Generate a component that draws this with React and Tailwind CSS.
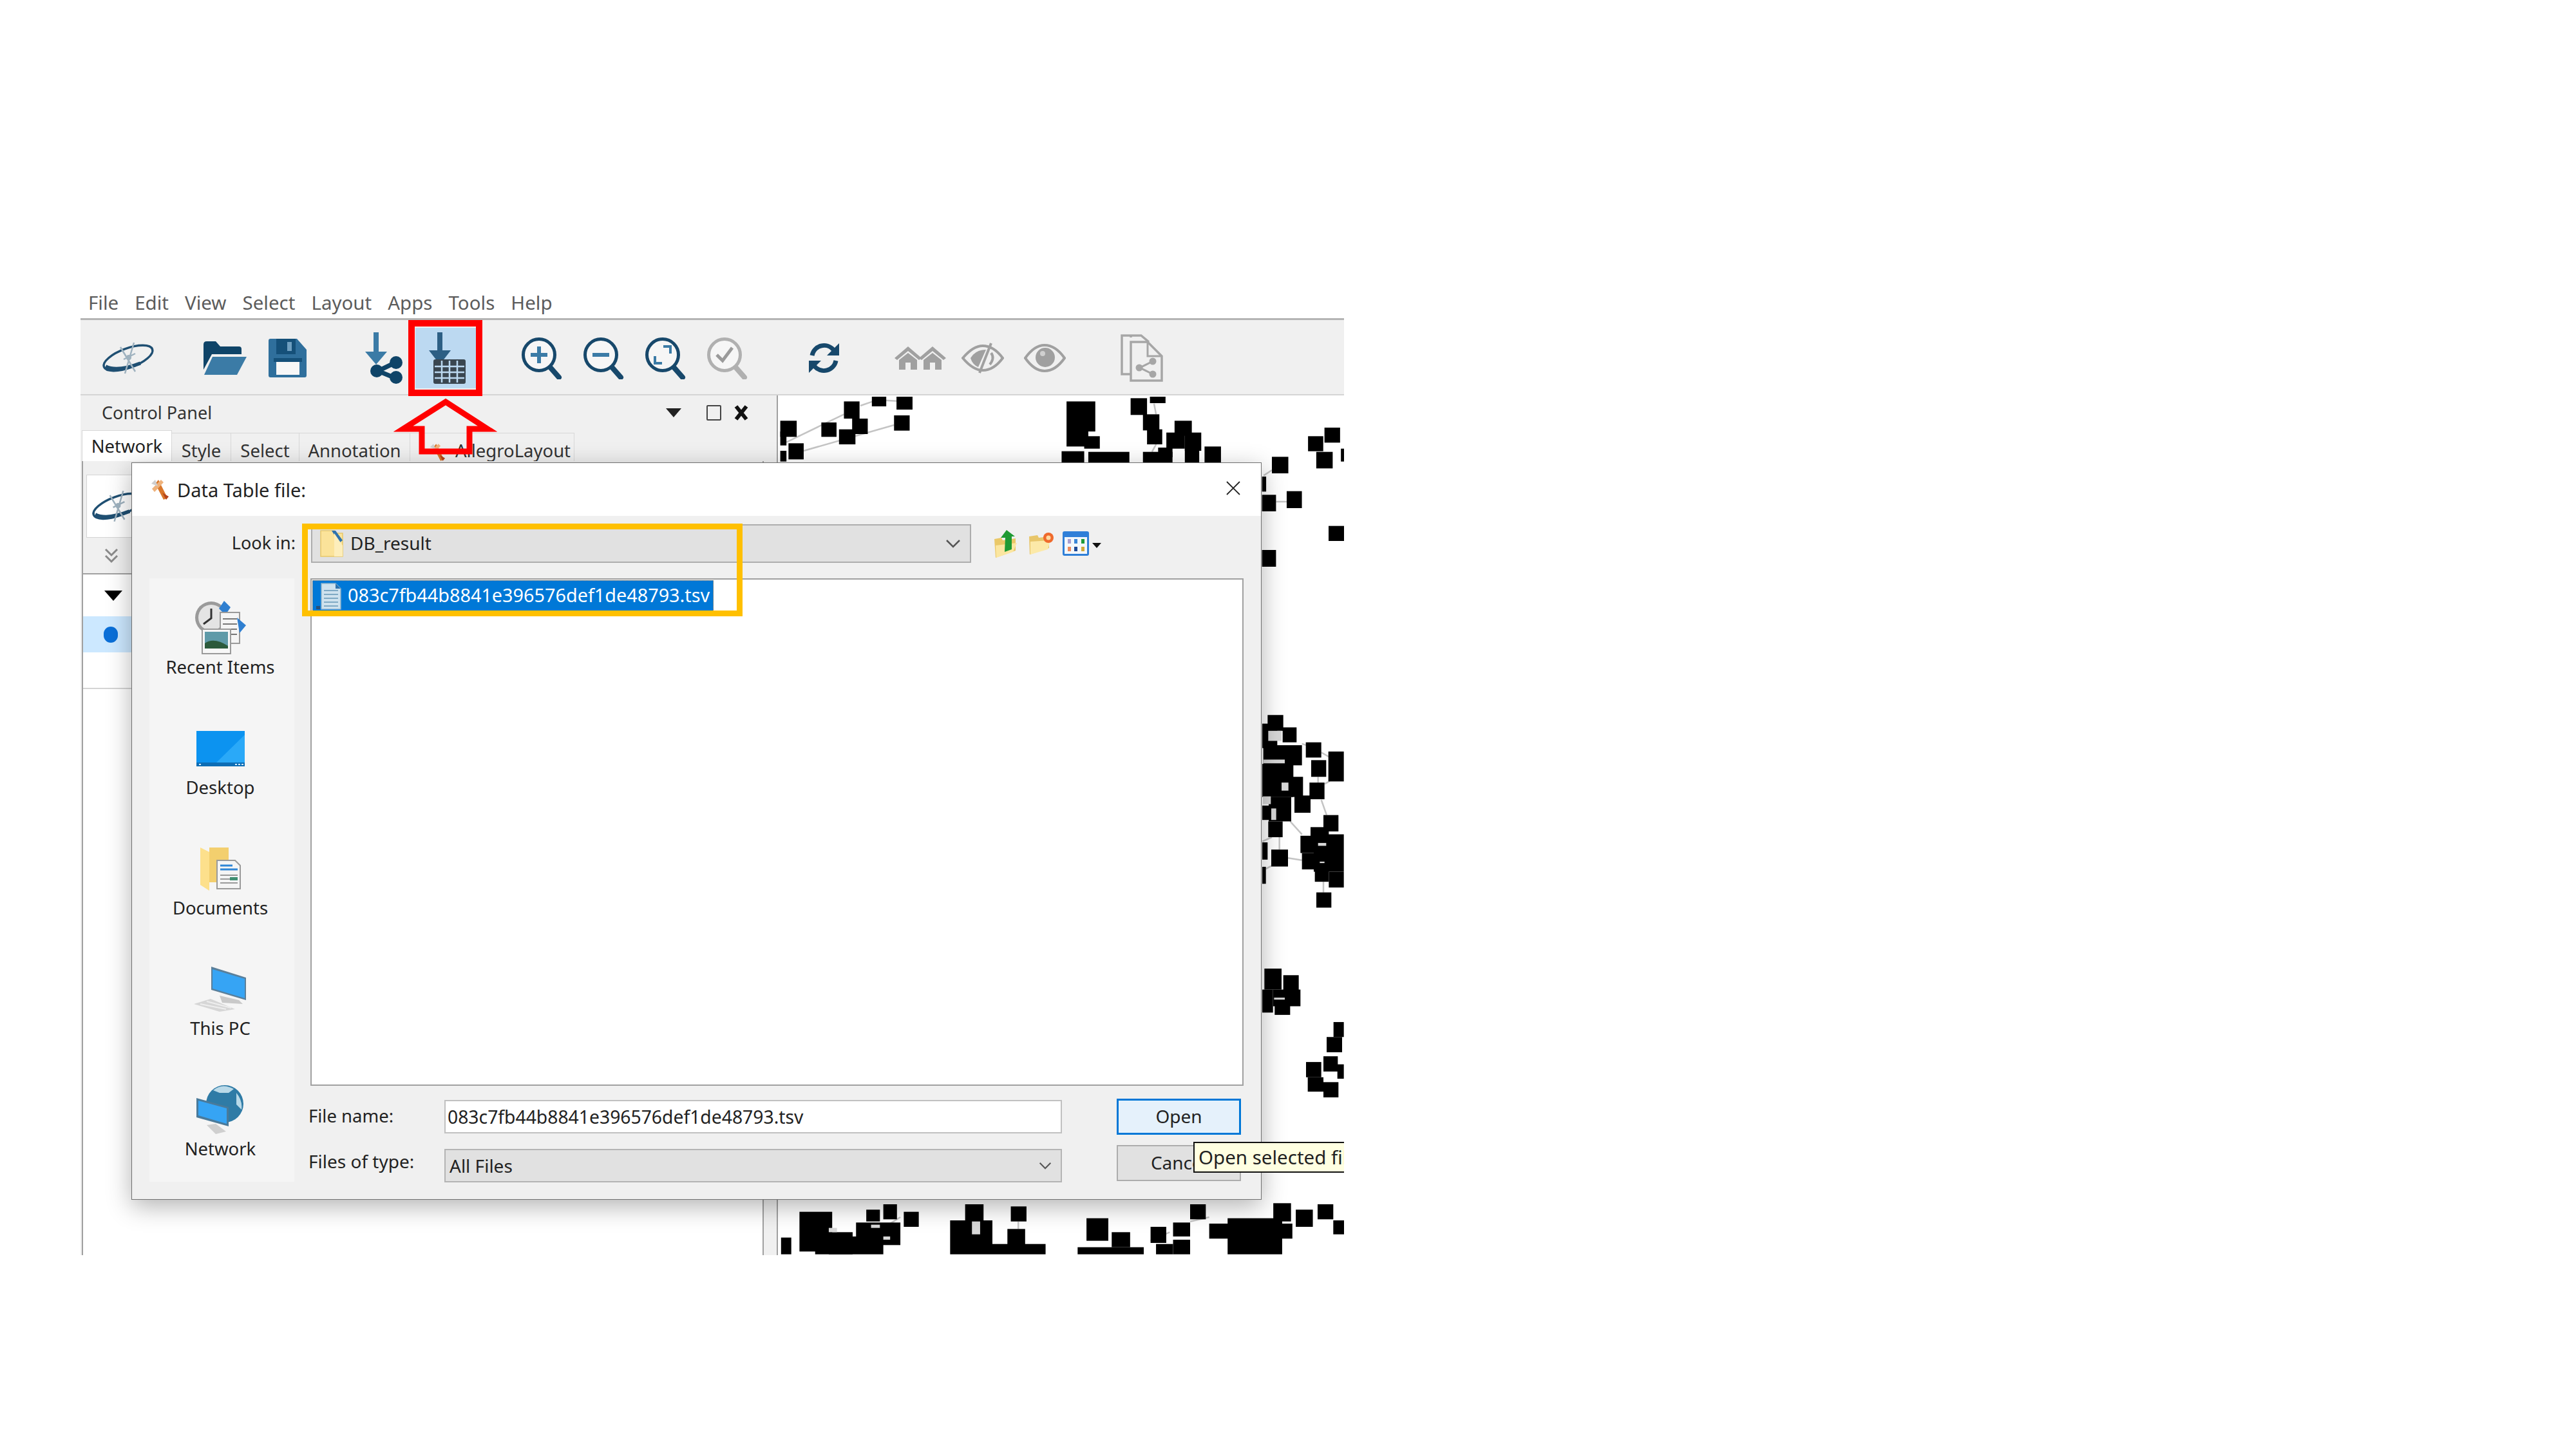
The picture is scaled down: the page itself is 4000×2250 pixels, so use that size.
const fromCrop = (ox, oy, sx, sy) => ([a, b, c, d]) => ({
  x: ox + a / sx,
  y: oy + c / sy,
  width: (b - a) / sx,
  height: (d - c) / sy,
});
const fromCropLine = (ox, oy, sx, sy) => ([a, b, c, d]) => ({
  x1: ox + a / sx,
  y1: oy + b / sy,
  x2: ox + c / sx,
  y2: oy + d / sy,
});

// node blocks of the network view, measured per zoomed area
const topArea = fromCrop(1100, 430, 1.568, 3);
const midArea = fromCrop(1900, 1050, 3, 2.24);
const lowArea = fromCrop(440, 1650, 0.9446, 3);

const nodes = [
  ...[
    [175, 215, 670, 745], [175, 190, 720, 785], [195, 232, 775, 850], [175, 190, 810, 860],
    [275, 312, 678, 745], [330, 368, 580, 660], [350, 388, 660, 732], [318, 358, 710, 780],
    [398, 433, 558, 603], [458, 497, 558, 618], [452, 490, 645, 716],
    [872, 942, 580, 720], [872, 925, 720, 790], [915, 953, 742, 800], [860, 915, 812, 865], [925, 1025, 815, 865],
    [1028, 1068, 565, 643], [1075, 1113, 558, 588], [1058, 1098, 640, 715], [1068, 1105, 710, 780],
    [1135, 1177, 670, 740], [1115, 1160, 725, 800], [1160, 1200, 725, 810], [1058, 1130, 815, 865],
    [1095, 1130, 795, 840], [1160, 1195, 800, 865], [1208, 1248, 790, 865],
    [1500, 1538, 702, 772], [1460, 1497, 742, 812], [1480, 1520, 815, 892], [1372, 1412, 838, 915], [1540, 1568, 800, 860],
    [1408, 1445, 998, 1077], [1348, 1382, 1015, 1092], [1510, 1548, 1160, 1230], [1348, 1382, 1272, 1350], [1348, 1358, 930, 1000],
  ].map(topArea),
  ...[
    [205, 278, 135, 190], [180, 250, 165, 250], [275, 340, 178, 230], [185, 365, 240, 310],
    [180, 325, 305, 420], [200, 370, 350, 420], [330, 405, 415, 475], [210, 315, 420, 505],
    [180, 230, 450, 500], [208, 275, 505, 560], [180, 205, 578, 638], [180, 197, 663, 722],
    [222, 300, 603, 662], [383, 455, 230, 283], [408, 478, 292, 350], [488, 560, 262, 366],
    [400, 470, 370, 428], [465, 535, 483, 540], [405, 490, 525, 600], [358, 420, 555, 615],
    [365, 425, 615, 672], [420, 560, 550, 680], [425, 490, 670, 715], [490, 560, 680, 735], [432, 502, 752, 805],
    [190, 270, 1017, 1090], [180, 230, 1090, 1170], [278, 350, 1040, 1110], [230, 358, 1090, 1148], [238, 310, 1125, 1178],
    [512, 560, 1203, 1255], [480, 552, 1255, 1308], [465, 532, 1322, 1375], [530, 560, 1350, 1400],
    [384, 455, 1342, 1395], [392, 465, 1395, 1445], [465, 535, 1412, 1465],
  ].map(midArea),
  ...[
    [757, 805, 695, 880], [730, 745, 815, 893], [780, 835, 790, 893], [840, 905, 745, 850],
    [855, 875, 685, 740], [880, 900, 660, 730], [910, 932, 695, 765], [800, 880, 810, 893],
    [978, 1040, 735, 893], [1000, 1027, 660, 760], [1067, 1090, 670, 740], [1062, 1088, 775, 850],
    [1040, 1118, 845, 893], [1178, 1210, 725, 830], [1165, 1262, 860, 893], [1215, 1242, 790, 860],
    [1272, 1295, 765, 840], [1305, 1330, 745, 810], [1305, 1330, 825, 893], [1280, 1305, 845, 893],
    [1330, 1353, 660, 730], [1358, 1480, 750, 820], [1385, 1465, 725, 893], [1452, 1478, 655, 740],
    [1485, 1510, 685, 765], [1517, 1540, 660, 730], [1540, 1568, 735, 800],
  ].map(lowArea),
];

// small gaps inside the clusters where edges show through
const holes = [
  ...[
    [208, 270, 190, 225], [270, 302, 370, 398], [222, 245, 460, 500], [183, 220, 418, 445],
    [440, 478, 580, 590], [448, 470, 645, 650], [185, 285, 290, 303], [235, 285, 1118, 1125],
  ].map(midArea),
  ...[
    [862, 875, 755, 770], [880, 890, 810, 825], [1010, 1022, 740, 800], [800, 812, 770, 790],
  ].map(lowArea),
];

const edges = [
  ...[
    [190, 770, 330, 640], [232, 810, 452, 690], [370, 600, 400, 580], [430, 575, 460, 578],
    [1085, 590, 1090, 640], [1090, 780, 1080, 815], [1352, 925, 1372, 900], [1382, 1047, 1408, 1047],
  ].map(fromCropLine(1100, 430, 1.568, 3)),
  ...[
    [310, 505, 365, 550], [300, 632, 365, 640], [455, 430, 480, 483], [465, 715, 465, 752],
    [260, 560, 260, 603], [197, 670, 222, 660], [180, 575, 225, 560], [365, 235, 385, 240],
    [455, 265, 490, 280], [470, 375, 495, 365], [440, 350, 440, 370],
  ].map(fromCropLine(1900, 1050, 3, 2.24)),
  ...[
    [1078, 740, 1078, 775], [1300, 790, 1272, 830], [1330, 740, 1358, 720], [905, 720, 880, 770],
  ].map(fromCropLine(440, 1650, 0.9446, 3)),
];

const NetworkView = () => (
  <svg viewBox="1208 614 879 1335" className="block w-[879px] h-[1335px]">
    {edges.map((e, i) => (
      <line key={i} {...e} stroke="#c4c4c4" strokeWidth="2.5" />
    ))}
    {nodes.map((n, i) => (
      <rect key={i} {...n} fill="#000" />
    ))}
    {holes.map((n, i) => (
      <rect key={i} {...n} fill="#d8d8d8" />
    ))}
  </svg>
);

const CyLogo = ({ className }) => (
  <svg viewBox="0 0 87 50" className={className}>
    <ellipse cx="43" cy="25" rx="40" ry="15" transform="rotate(-20 43 25)" fill="none" stroke="#1f4f72" strokeWidth="3.5" />
    <path d="M8 38 Q26 47 62 33" fill="none" stroke="#1f4f72" strokeWidth="5.5" />
    <path d="M38 49 L52 1 M31 8 L54 46 M36 27 L54 18" fill="none" stroke="#9fb2bf" strokeWidth="2.5" />
    <circle cx="44" cy="24" r="4" fill="#9fb2bf" />
  </svg>
);

const FolderOpenIcon = () => (
  <svg viewBox="0 0 68 52" className="ml-[72px] w-[68px] h-[52px]">
    <path d="M1 5 Q1 0 6 0 L20 0 L27 8 L56 8 Q60 8 60 12 L60 20 L14 20 L1 44 Z" fill="#0f4468" />
    <path d="M15 24 L68 24 L53 52 L2 52 Z" fill="#3b7ba6" />
  </svg>
);

const SaveIcon = () => (
  <svg viewBox="0 0 59 60" className="ml-[34px] w-[59px] h-[60px]">
    <path d="M3 0 L44 0 L59 17 L59 57 Q59 60 56 60 L3 60 Q0 60 0 57 L0 3 Q0 0 3 0 Z" fill="#2f6f9c" />
    <path d="M12 0 L42 0 L42 24 L12 24 Z" fill="#155079" />
    <rect x="29" y="5" width="7" height="14" fill="#6f9fc0" />
    <rect x="12" y="36" width="36" height="20" fill="#f7f7f7" />
    <rect x="8" y="30" width="44" height="6" fill="#155079" />
  </svg>
);

const ImportNetworkIcon = () => (
  <svg viewBox="0 0 61 80" className="ml-[89px] w-[61px] h-[80px]">
    <path d="M15 0 L23 0 L23 30 L36 30 L19 50 L2 30 L15 30 Z" fill="#3b7ba6" />
    <path d="M51 46 L22 60 L51 72" fill="none" stroke="#0f4468" strokeWidth="7" />
    <circle cx="50" cy="47" r="10" fill="#0f4468" />
    <circle cx="20" cy="60" r="10" fill="#0f4468" />
    <circle cx="50" cy="70" r="10" fill="#0f4468" />
  </svg>
);

const ImportTableButton = () => (
  <div className="ml-[19px] w-[95px] h-[94px] bg-[#bcd9f1] flex items-center justify-center">
    <svg viewBox="0 0 62 80" className="w-[62px] h-[80px]">
      <path d="M17 0 L25 0 L25 28 L38 28 L21 50 L4 28 L17 28 Z" fill="#2d5f84" />
      <rect x="11" y="42" width="50" height="38" rx="3" fill="#3a4650" />
      <path d="M13 53 H59 M13 62 H59 M13 71 H59 M24 44 V78 M36 44 V78 M48 44 V78" stroke="#bcd9f1" strokeWidth="2.5" />
    </svg>
  </div>
);

const ZoomGlass = ({ className, ring = "#17486b", children }) => (
  <svg viewBox="0 0 64 65" className={`${className} w-[64px] h-[65px]`}>
    <path d="M44 46 L58 62" stroke={ring} strokeWidth="8" strokeLinecap="round" />
    <circle cx="27" cy="27" r="24.5" fill="#f6f6f6" stroke={ring} strokeWidth="5" />
    {children}
  </svg>
);

const RefreshIcon = () => (
  <svg viewBox="0 0 49 50" className="ml-[93px] w-[49px] h-[50px]">
    <path d="M6 21 A19 19 0 0 1 39 12" fill="none" stroke="#17486b" strokeWidth="7" />
    <path d="M48 2 L48 21 L29 21 Z" fill="#17486b" />
    <path d="M43 29 A19 19 0 0 1 10 38" fill="none" stroke="#17486b" strokeWidth="7" />
    <path d="M1 48 L1 29 L20 29 Z" fill="#17486b" />
  </svg>
);

const HousesIcon = () => (
  <svg viewBox="0 0 80 36" className="ml-[85px] w-[80px] h-[36px]">
    {[0, 38].map((x) => (
      <g key={x} transform={`translate(${x} 0)`}>
        <path d="M0 18 L21 0 L42 18 L38 21 L21 7 L4 21 Z" fill="#a0a0a0" />
        <path d="M7 21 L21 10 L35 21 L35 36 L25 36 L25 25 L17 25 L17 36 L7 36 Z" fill="#a0a0a0" />
      </g>
    ))}
  </svg>
);

const EyeSlashIcon = () => (
  <svg viewBox="0 0 66 48" className="ml-[24px] w-[66px] h-[48px]">
    <path d="M2 24 Q18 5 33 5 Q50 5 64 24 Q50 43 33 43 Q18 43 2 24 Z" fill="none" stroke="#a0a0a0" strokeWidth="4" />
    <path d="M14 24 Q22 11 38 11 L26 38 Q17 34 14 24 Z" fill="#a0a0a0" />
    <path d="M46 1 L28 47" stroke="#a0a0a0" strokeWidth="4" />
    <path d="M46 16 Q52 24 44 34" fill="none" stroke="#a0a0a0" strokeWidth="4" />
  </svg>
);

const EyeIcon = () => (
  <svg viewBox="0 0 65 44" className="ml-[31px] w-[65px] h-[44px]">
    <path d="M2 22 Q16 2 32 2 Q49 2 63 22 Q49 42 32 42 Q16 42 2 22 Z" fill="none" stroke="#a0a0a0" strokeWidth="4" />
    <circle cx="33" cy="21" r="15" fill="#a0a0a0" />
    <circle cx="29" cy="15" r="4" fill="#d0d0d0" />
  </svg>
);

const ShareDocIcon = () => (
  <svg viewBox="0 0 66 74" className="ml-[85px] w-[66px] h-[74px]">
    <path d="M16 5 L16 2 L32 2 L44 12 M16 62 L2 62 L2 2 L16 2" fill="none" stroke="#a6a6a6" strokeWidth="3.5" />
    <path d="M16 12 L42 12 L64 34 L64 72 L16 72 Z" fill="#f0f0f0" stroke="#a6a6a6" strokeWidth="3.5" />
    <path d="M42 12 L42 34 L64 34" fill="none" stroke="#a6a6a6" strokeWidth="3" />
    <path d="M50 42 L30 52 L50 62" fill="none" stroke="#a6a6a6" strokeWidth="3" />
    <circle cx="50" cy="42" r="5.5" fill="#a6a6a6" />
    <circle cx="29" cy="52" r="5.5" fill="#a6a6a6" />
    <circle cx="50" cy="62" r="5.5" fill="#a6a6a6" />
  </svg>
);

const ToolIcon = ({ className }) => (
  <svg viewBox="0 0 28 34" className={className}>
    <path d="M12 2 L26 30 L20 33 L7 8 Z" fill="#d9772b" />
    <path d="M2 16 L16 2 L20 6 L6 21 Z" fill="#eeb27c" />
    <path d="M18 22 L24 33 L28 28 Z" fill="#b5431a" />
    <path d="M1 8 L7 2 L11 12 Z" fill="#cfcfcf" />
  </svg>
);

const SmallFolder = ({ className }) => (
  <svg viewBox="0 0 36 42" className={className}>
    <path d="M1 1 L22 1 L22 5 L35 5 L35 41 L1 41 Z" fill="#fbe39a" stroke="#e7c768" strokeWidth="1.5" />
    <path d="M18 1 L24 1 L35 16 L30 20 Z" fill="#2d72ad" />
    <path d="M22 5 L35 24 L35 41 L22 41 Z" fill="#fdeebb" />
  </svg>
);

const TsvFileIcon = () => (
  <svg viewBox="0 0 40 42" className="w-[40px] h-[42px] shrink-0">
    <path d="M8 1 L30 1 L38 9 L38 41 L8 41 Z" fill="#cfe2ee" stroke="#8eb4cc" strokeWidth="1.5" />
    <path d="M12 12 H34 M12 18 H34 M12 24 H34 M12 30 H34 M12 36 H34" stroke="#7ea9c4" strokeWidth="2" />
    <path d="M0 36 L6 36 L6 41 L0 41 Z" fill="#2a4f78" />
    <path d="M30 1 L38 9 L30 9 Z" fill="#2d72ad" />
  </svg>
);

const UpFolderIcon = () => (
  <svg viewBox="0 0 37 43" className="ml-[35px] w-[37px] h-[43px]">
    <path d="M1 14 L12 12 L14 16 L34 13 L34 32 L3 43 Z" fill="#eac868" />
    <path d="M3 24 L36 20 L30 34 L4 43 Z" fill="#fbe6a0" />
    <path d="M20 0 L33 10 L28 10 L28 30 L17 34 L18 12 L11 12 Z" fill="#1f9a33" />
  </svg>
);

const NewFolderIcon = () => (
  <svg viewBox="0 0 40 34" className="ml-[17px] w-[40px] h-[34px]">
    <path d="M1 6 L14 4 L16 8 L32 6 L32 24 L2 34 Z" fill="#e8c66a" />
    <path d="M3 14 L34 12 L30 26 L3 34 Z" fill="#fce9a8" />
    <circle cx="31" cy="8" r="8" fill="#ef6a2c" />
    <circle cx="31" cy="8" r="3.5" fill="#ffd9a0" />
  </svg>
);

const ViewMenuIcon = () => (
  <svg viewBox="0 0 60 38" className="ml-[13px] w-[60px] h-[38px]">
    <rect x="0" y="0" width="41" height="38" rx="3" fill="#2f7fd8" />
    <rect x="3" y="9" width="35" height="26" fill="#f3f7fb" />
    {[
      [8, 12, "#a99fd0"], [18, 12, "#3a86d8"], [29, 12, "#1e9a3a"],
      [8, 24, "#ee8a5c"], [18, 24, "#1f4a96"], [29, 24, "#d2a93a"],
    ].map(([x, y, c]) => (
      <rect key={`${x}-${y}`} x={x} y={y} width="5" height="7" fill={c} />
    ))}
    <path d="M46 18 L60 18 L53 26 Z" fill="#111" />
  </svg>
);

const Chevron = ({ className }) => (
  <svg viewBox="0 0 24 14" className={className}>
    <path d="M2 2 L12 12 L22 2" fill="none" stroke="#555" strokeWidth="2.5" />
  </svg>
);

const RecentIcon = () => (
  <svg viewBox="0 0 80 84" className="w-[80px] h-[84px]">
    <circle cx="26" cy="26" r="25" fill="#9a9a9a" />
    <circle cx="26" cy="26" r="20" fill="#e4e4e4" />
    <path d="M26 12 L26 27 L14 36" fill="none" stroke="#333" strokeWidth="3" />
    <path d="M46 0 L56 10 L48 22 L38 12 Z" fill="#2f7fd0" />
    <rect x="40" y="18" width="30" height="48" fill="#f5f5f5" stroke="#9a9a9a" strokeWidth="2" />
    <path d="M44 28 H66 M44 36 H66 M44 44 H66 M44 52 H66" stroke="#777" strokeWidth="2" />
    <path d="M66 26 L80 38 L70 50 Z" fill="#2f7fd0" />
    <rect x="12" y="44" width="44" height="38" fill="#f7f7f7" stroke="#9a9a9a" strokeWidth="2" />
    <rect x="16" y="48" width="36" height="26" fill="#5f9aa8" />
    <path d="M16 66 Q30 56 52 70 L52 74 L16 74 Z" fill="#2c5a3c" />
  </svg>
);

const DesktopIcon = () => (
  <svg viewBox="0 0 75 55" className="w-[75px] h-[55px]">
    <rect width="75" height="55" fill="#0c93f0" />
    <path d="M30 50 L75 6 L75 50 Z" fill="#2aa9f8" />
    <rect y="49" width="75" height="6" fill="#0d6db5" />
    <path d="M4 52 h3 M60 52 h3 M65 52 h3 M70 52 h3" stroke="#cfeaff" strokeWidth="2" />
  </svg>
);

const DocumentsIcon = () => (
  <svg viewBox="0 0 63 67" className="w-[63px] h-[67px]">
    <path d="M14 0 L44 0 L44 54 L14 54 Z" fill="#f3cf6e" />
    <path d="M0 0 L14 7 L14 67 L0 58 Z" fill="#fde08c" />
    <path d="M26 20 L54 20 L62 28 L62 64 L26 64 Z" fill="#f5f5f5" stroke="#9a9a9a" strokeWidth="2" />
    <path d="M31 28 H50 M31 34 H58" stroke="#2f86d6" strokeWidth="3" />
    <path d="M31 43 H58 M31 49 H58 M31 55 H58" stroke="#9a9a9a" strokeWidth="2" />
    <rect x="46" y="46" width="12" height="5" fill="#3f8f72" />
  </svg>
);

const ThisPcIcon = () => (
  <svg viewBox="0 0 83 70" className="w-[83px] h-[70px]">
    <path d="M27 0 L81 17 L81 52 L27 36 Z" fill="#5a7f9a" />
    <path d="M29 4 L79 19 L79 49 L29 34 Z" fill="#36a4f4" />
    <path d="M40 45 L70 52 L76 58 L44 56 Z" fill="#c9c9c9" />
    <path d="M0 58 L26 50 L64 66 L40 70 Z" fill="#d6d6d6" />
    <path d="M10 58 L50 66 M20 54 L58 64" stroke="#eeeeee" strokeWidth="2" />
  </svg>
);

const NetworkIcon = () => (
  <svg viewBox="0 0 74 76" className="w-[74px] h-[76px]">
    <circle cx="44" cy="29" r="29" fill="#2f7ba6" />
    <path d="M26 8 Q40 -4 58 6 L50 12 L36 12 Z M62 12 Q72 24 70 38 L62 30 Z" fill="#b9d9e8" />
    <path d="M0 20 L50 34 L50 64 L0 50 Z" fill="#4a7a9a" />
    <path d="M3 24 L47 36 L47 60 L3 47 Z" fill="#36a4f4" />
    <path d="M16 62 L30 60 L46 72 L30 76 Z" fill="#cfcfcf" />
  </svg>
);

const places = [
  { label: "Recent Items", Icon: RecentIcon },
  { label: "Desktop", Icon: DesktopIcon },
  { label: "Documents", Icon: DocumentsIcon },
  { label: "This PC", Icon: ThisPcIcon },
  { label: "Network", Icon: NetworkIcon },
];

const menus = ["File", "Edit", "View", "Select", "Layout", "Apps", "Tools", "Help"];

const Dialog = () => (
  <div className="absolute left-[79px] top-[268px] w-[1755px] h-[1145px] bg-[#f0f0f0] border border-[#6f6f6f] shadow-[0_10px_36px_rgba(0,0,0,0.3)] flex flex-col text-[#222] text-[28px] leading-none">
    <div className="h-[82px] shrink-0 bg-white flex items-center pl-[29px] pr-[31px]">
      <ToolIcon className="w-[28px] h-[34px]" />
      <span className="ml-[13px] text-[29px]">Data Table file:</span>
      <svg viewBox="0 0 24 24" className="ml-auto mb-[4px] w-[24px] h-[24px]">
        <path d="M2 2 L22 22 M22 2 L2 22" stroke="#222" strokeWidth="1.8" />
      </svg>
    </div>
    <div className="flex-1 pl-[27px] pt-[13px]">
      <div className="flex items-center h-[60px]">
        <div className="w-[227px] pb-[3px] text-right text-[27px]">Look in:</div>
        <div className="ml-[24px] w-[1025px] h-[60px] bg-[#e1e1e1] border-2 border-[#adadad] flex items-center pl-[12px] pr-[14px]">
          <SmallFolder className="w-[36px] h-[42px]" />
          <span className="ml-[11px] pb-[3px] text-[28px]">DB_result</span>
          <Chevron className="ml-auto w-[24px] h-[14px]" />
        </div>
        <UpFolderIcon />
        <NewFolderIcon />
        <ViewMenuIcon />
      </div>
      <div className="flex mt-[24px]">
        <div className="w-[225px] h-[937px] bg-[#f5f5f5] pt-[34px] pr-[5px] flex flex-col gap-[65px]">
          {places.map(({ label, Icon }) => (
            <div key={label} className="flex flex-col items-center">
              <div className="h-[86px] flex items-center">
                <Icon />
              </div>
              <div className="h-[36px] flex items-center text-[27.5px] whitespace-nowrap">{label}</div>
            </div>
          ))}
        </div>
        <div className="ml-[25px] w-[1449px]">
          <div className="h-[788px] bg-white border-2 border-[#a0a0a0] p-[1px]">
            <div className="w-[623px] h-[49px] bg-[#0078d7] flex items-center pl-[6px] text-white outline-1 outline-dotted outline-[#c08a50] -outline-offset-1">
              <TsvFileIcon />
              <span className="ml-[9px] pb-[3px] text-[28.8px] whitespace-nowrap">083c7fb44b8841e396576def1de48793.tsv</span>
            </div>
          </div>
          <div className="flex items-center mt-[20px] h-[56px]">
            <div className="-ml-[3px] w-[211px] pb-[3px] text-[27.5px]">File name:</div>
            <div className="w-[959px] h-[52px] bg-white border-2 border-[#c0c0c0] flex items-center pl-[3px] text-[28.3px]">
              083c7fb44b8841e396576def1de48793.tsv
            </div>
            <button className="ml-[85px] w-[193px] h-[56px] bg-[#e5f1fb] border-[3px] border-[#0078d7] pb-[3px] text-[28px]">Open</button>
          </div>
          <div className="flex items-start mt-[16px]">
            <div className="-ml-[3px] w-[211px] h-[52px] pb-[3px] flex items-center text-[28px]">Files of type:</div>
            <div className="mt-[6px] w-[959px] h-[52px] bg-[#e1e1e1] border-2 border-[#b4b4b4] flex items-center pl-[6px] pr-[14px] text-[28px]">
              All Files
              <Chevron className="ml-auto w-[20px] h-[14px]" />
            </div>
            <button className="ml-[85px] w-[193px] h-[56px] bg-[#e1e1e1] border-2 border-[#adadad] pb-[3px] text-[28px]">Cancel</button>
          </div>
        </div>
      </div>
    </div>
  </div>
);

const App = () => {
  return (
    <div className="relative w-[4000px] h-[2250px] bg-white font-['Noto_Sans',sans-serif]">
      <div className="absolute left-[125px] top-[450px] w-[1962px] h-[1499px] overflow-hidden flex flex-col bg-white">
        <div className="h-[47px] shrink-0 border-b-[3px] border-[#b4b4b4] flex items-center gap-[25px] pl-[12px] pb-[4px] text-[29.5px] leading-none text-[#5c5c5c]">
          {menus.map((m) => (
            <span key={m}>{m}</span>
          ))}
        </div>
        <div className="h-[117px] shrink-0 bg-[#f0f0f0] border-b-2 border-[#d4d4d4] flex items-center pt-[3px]">
          <CyLogo className="ml-[31px] w-[87px] h-[50px]" />
          <FolderOpenIcon />
          <SaveIcon />
          <ImportNetworkIcon />
          <ImportTableButton />
          <ZoomGlass className="ml-[70px]">
            <path d="M27 14 V40 M14 27 H40" stroke="#3b7ba6" strokeWidth="6" />
          </ZoomGlass>
          <ZoomGlass className="ml-[32px]">
            <path d="M14 27 H40" stroke="#3b7ba6" strokeWidth="6" />
          </ZoomGlass>
          <ZoomGlass className="ml-[32px]">
            <path d="M28 14 H39 V25 M26 40 H15 V29" fill="none" stroke="#3b7ba6" strokeWidth="4" />
          </ZoomGlass>
          <ZoomGlass className="ml-[32px]" ring="#b0b0b0">
            <path d="M15 27 L24 36 L39 16" fill="none" stroke="#9a9a9a" strokeWidth="5" />
          </ZoomGlass>
          <RefreshIcon />
          <HousesIcon />
          <EyeSlashIcon />
          <EyeIcon />
          <ShareDocIcon />
        </div>
        <div className="flex-1 flex min-h-0">
          <div className="w-[1061px] flex flex-col bg-[#f0f0f0]">
            <div className="h-[58px] shrink-0 flex items-center pl-[33px] pb-[5px] text-[27px] leading-none text-[#333]">
              <span>Control Panel</span>
              <svg viewBox="0 0 24 14" className="ml-[705px] w-[24px] h-[14px]">
                <path d="M0 0 H24 L12 14 Z" fill="#222" />
              </svg>
              <div className="ml-[39px] w-[23px] h-[24px] border-2 border-[#444] rounded-[2px]" />
              <svg viewBox="0 0 24 24" className="ml-[19px] w-[24px] h-[24px]">
                <path d="M4 2 L20 22 M20 2 L4 22" stroke="#111" strokeWidth="6" />
              </svg>
            </div>
            <div className="h-[44px] shrink-0 flex items-end pl-[2px] text-[27.5px] leading-none text-[#333]">
              <div className="w-[140px] h-[48px] bg-white border-t border-x border-[#d8d8d8] flex justify-center pt-[10px] text-[#222]">Network</div>
              <div className="w-[92px] h-[44px] border-t border-r border-[#d8d8d8] flex justify-center pt-[13px]">Style</div>
              <div className="w-[106px] h-[44px] border-t border-r border-[#d8d8d8] flex justify-center pt-[13px]">Select</div>
              <div className="w-[172px] h-[44px] border-t border-r border-[#d8d8d8] flex justify-center pt-[13px]">Annotation</div>
              <div className="w-[255px] h-[44px] border-t border-r border-[#d8d8d8] flex pl-[30px] pt-[13px]">
                <ToolIcon className="w-[24px] h-[32px] shrink-0" />
                <span className="ml-[16px]">AllegroLayout</span>
              </div>
            </div>
            <div className="flex-1 bg-white border-l-2 border-r-2 border-[#a0a0a0] ml-[2px] flex flex-col">
              <div className="h-[119px] pt-[21px] pl-[5px] bg-[#f0f0f0]">
                <div className="h-[98px] bg-white border border-[#d4d4d4] flex items-center pl-[5px]">
                  <CyLogo className="w-[86px] h-[50px]" />
                </div>
              </div>
              <div className="h-[55px] bg-[#f0f0f0] flex items-center pl-[32px]">
                <svg viewBox="0 0 24 26" className="w-[24px] h-[26px]">
                  <path d="M3 3 L12 12 L21 3 M3 13 L12 22 L21 13" fill="none" stroke="#8a8a8a" strokeWidth="3" />
                </svg>
              </div>
              <div className="h-[67px] border-t-2 border-[#a0a0a0] flex items-center pl-[33px]">
                <svg viewBox="0 0 28 16" className="w-[28px] h-[16px]">
                  <path d="M0 0 H28 L14 16 Z" fill="#000" />
                </svg>
              </div>
              <div className="h-[56px] bg-[#cce8ff] flex items-center pl-[32px]">
                <div className="w-[22px] h-[25px] rounded-full bg-[#0a6fd8]" />
              </div>
              <div className="h-[57px] border-b-2 border-[#d4d4d4]" />
            </div>
          </div>
          <div className="w-[22px] bg-[#f0f0f0] border-r-2 border-[#a0a0a0]" />
          <div className="flex-1 bg-white">
            <NetworkView />
          </div>
        </div>
        <Dialog />
        <div className="absolute left-[1728px] top-[1323px] w-[300px] h-[48px] bg-[#ffffe1] border-2 border-[#111] flex items-center pl-[6px] text-[29.5px] leading-none text-[#222] whitespace-nowrap">
          Open selected file
        </div>
      </div>

      {/* callouts on top of the screenshot */}
      <div className="absolute left-[634px] top-[497px] w-[115px] h-[118px] border-[10px] border-[#ff0000]" />
      <svg viewBox="0 0 161 89" className="absolute left-[611px] top-[617px] w-[161px] h-[89px]">
        <path d="M81 7 L146 49 L118 49 L118 84 L44 84 L44 49 L15 49 Z" fill="none" stroke="#ff0000" strokeWidth="9" />
      </svg>
      <div className="absolute left-[469px] top-[813px] w-[684px] h-[144px] border-[9px] border-[#ffc000]" />
    </div>
  );
};

export default App;
